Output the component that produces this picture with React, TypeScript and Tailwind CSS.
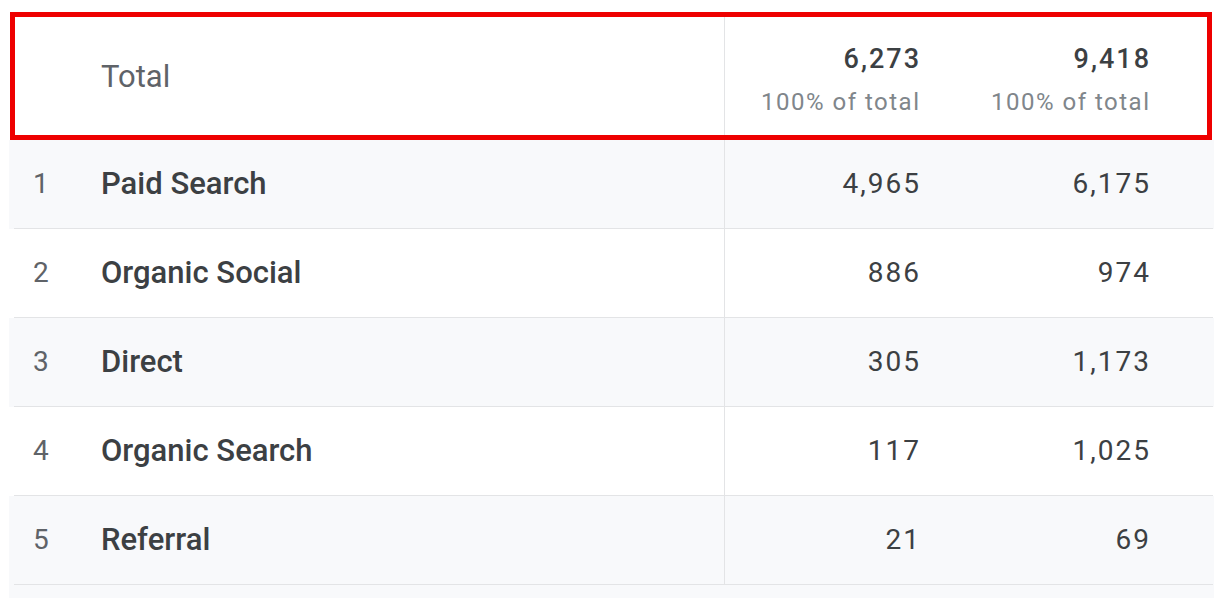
const rows = [
  { rank: 1, name: "Paid Search", users: "4,965", sessions: "6,175" },
  { rank: 2, name: "Organic Social", users: "886", sessions: "974" },
  { rank: 3, name: "Direct", users: "305", sessions: "1,173" },
  { rank: 4, name: "Organic Search", users: "117", sessions: "1,025" },
  { rank: 5, name: "Referral", users: "21", sessions: "69" },
];

export default function App() {
  return (
    <div className="relative h-[598px] w-[1226px] overflow-hidden bg-white pl-[9px] pt-[15px] font-['Roboto',sans-serif] text-[#3c4043]">
      <div className="w-[1205px]">
        {/* Total row */}
        <div className="grid h-[125px] grid-cols-[92px_623px_195px_230px_1fr] bg-white">
          <div />
          <div className="flex items-center pb-px text-[31px] text-[#5f6368]">Total</div>
          <div className="flex flex-col items-end justify-center border-l border-[#e3e4e6] pt-[2px]">
            <span className="-mr-[2px] text-[27px] font-medium leading-[34px] tracking-[2px]">6,273</span>
            <span className="-mr-[1.5px] mt-[12px] text-[24px] leading-[28px] tracking-[1.5px] text-[#80868b]">100% of total</span>
          </div>
          <div className="flex flex-col items-end justify-center pt-[2px]">
            <span className="-mr-[2px] text-[27px] font-medium leading-[34px] tracking-[2px]">9,418</span>
            <span className="-mr-[1.5px] mt-[12px] text-[24px] leading-[28px] tracking-[1.5px] text-[#80868b]">100% of total</span>
          </div>
          <div />
        </div>

        {/* Data rows */}
        {rows.map((r) => (
          <div
            key={r.rank}
            className={`flex h-[89px] flex-col ${r.rank % 2 === 1 ? "bg-[#f8f9fb]" : "bg-white"}`}
          >
            <div className="grid flex-1 grid-cols-[92px_623px_195px_230px_1fr]">
              <div className="flex items-center pl-[24px] text-[28px] text-[#5f6368]">{r.rank}</div>
              <div className="flex items-center text-[31px] font-medium">{r.name}</div>
              <div className="flex items-center justify-end border-l border-[#e3e4e6]">
                <span className="-mr-[2px] text-[28px] tracking-[2px]">{r.users}</span>
              </div>
              <div className="flex items-center justify-end">
                <span className="-mr-[2px] text-[28px] tracking-[2px]">{r.sessions}</span>
              </div>
              <div />
            </div>
            <div className="ml-[5px] mr-[1px] h-px bg-[#e3e4e6]" />
          </div>
        ))}
        <div className="h-[20px] bg-[#f8f9fb]" />
      </div>

      {/* red highlight annotation */}
      <div className="pointer-events-none absolute left-[10px] top-[12px] h-[128px] w-[1202px] border-[5px] border-[#ee0000]" />
    </div>
  );
}
